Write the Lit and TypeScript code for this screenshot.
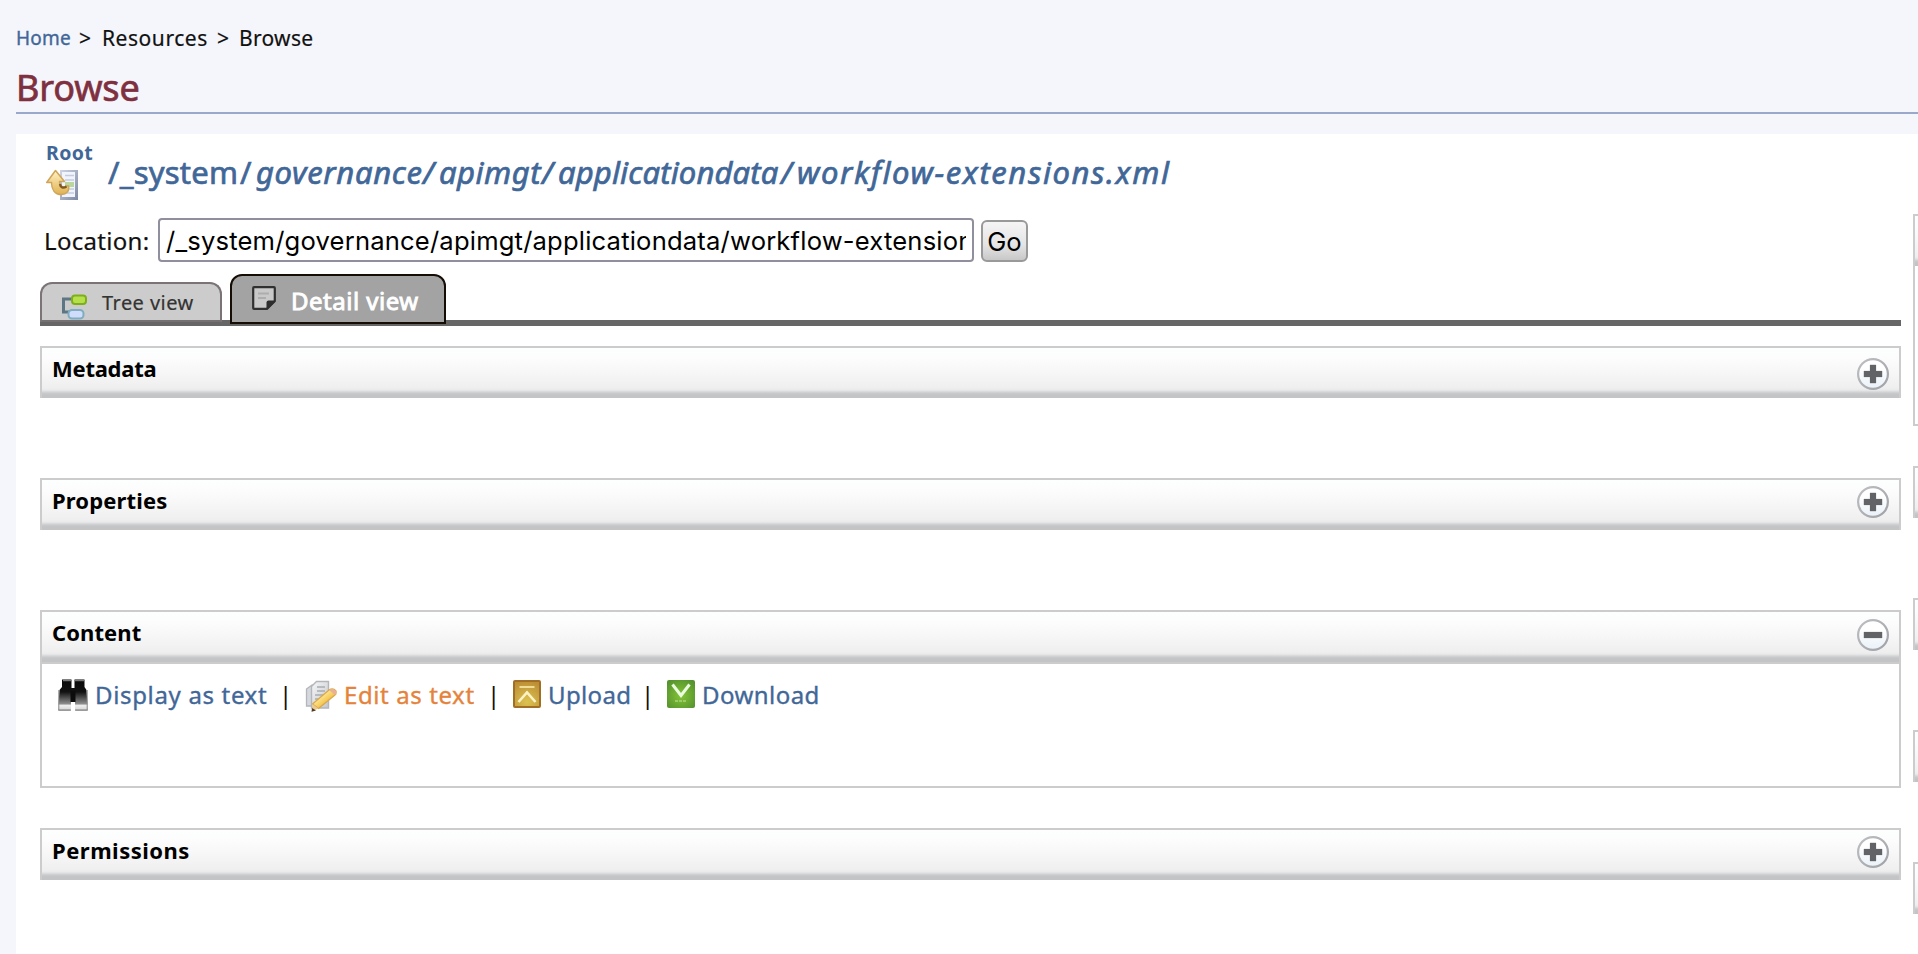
import { LitElement, html, css, svg, nothing } from "lit";
import { customElement, property } from "lit/decorators.js";
import { classMap } from "lit/directives/class-map.js";

const rootIcon = html`<svg width="32" height="32" viewBox="0 0 32 32">
  <defs>
    <linearGradient id="rp" x1="0" y1="0" x2="1" y2="1"><stop offset="0" stop-color="#cfd5e4" /><stop offset="1" stop-color="#7d88a3" /></linearGradient>
    <linearGradient id="ra" x1="0" y1="0" x2="0" y2="1"><stop offset="0" stop-color="#fff3c4" /><stop offset="1" stop-color="#e0b152" /></linearGradient>
  </defs>
  <rect x="14" y="1" width="18" height="30" fill="url(#rp)" />
  <rect x="16" y="3" width="13" height="25" fill="#f1f4fb" />
  <path d="M19 6.500h9M19 11h9M19 20h9M19 24h9" stroke="#c3cbdf" stroke-width="1.600" />
  <path d="M19 15.500h9" stroke="#b9d79c" stroke-width="5" />
  <path d="M9.500 1.500L18.500 12.500H13.500C13.500 17 15 18.500 18 18.500C20 18.500 20 16 22.500 17C23.500 22 20.500 25.500 15.500 25.500C8.500 25.500 5.500 20 5.500 13.500H.7Z" fill="url(#ra)" stroke="#cfa55a" stroke-width="1.500" stroke-linejoin="round" />
  <path d="M14 15C14.500 18.500 17 19.500 20.500 17.500" fill="none" stroke="#80591f" stroke-width="2.400" />
</svg>`;

const treeIcon = html`<svg width="26" height="26" viewBox="0 0 26 26">
  <path d="M11 5H2.500V18H8" fill="none" stroke="#5d7684" stroke-width="3" />
  <rect x="11" y="1.500" width="14" height="8.500" rx="3" fill="#b5e04c" stroke="#7fae1b" stroke-width="2" />
  <rect x="7.500" y="16" width="15" height="8.500" rx="3.500" fill="#cfdcfb" stroke="#7fadc0" stroke-width="2" />
</svg>`;

const noteIcon = html`<svg width="24" height="24" viewBox="0 0 24 24">
  <path d="M2 1.200H22Q22.800 1.200 22.800 2V15L15 22.800H2Q1.200 22.800 1.200 22V2Q1.200 1.200 2 1.200Z" fill="#c9c9c9" stroke="#303030" stroke-width="2.200" />
  <path d="M22.500 14.500H16.500Q14.500 14.500 14.500 16.500V23H16L23 16Z" fill="#2d2d2d" />
  <path d="M6 7.500H17M6 12H14" stroke="#adadad" stroke-width="2" />
</svg>`;

const binocularsIcon = html`<svg width="30" height="32" viewBox="0 0 30 32">
  <defs><linearGradient id="bn" x1="0" y1="0" x2="0" y2="1"><stop offset="0" stop-color="#080808" /><stop offset=".4" stop-color="#111" /><stop offset=".78" stop-color="#8c8c8c" /><stop offset=".84" stop-color="#eee" /><stop offset=".94" stop-color="#ddd" /><stop offset="1" stop-color="#888" /></linearGradient></defs>
  <path d="M4 .5H13.500V9H16.500V.5H26.500V8L28.500 11L30 31.500H17V23H13V31.500H0L1.500 11L4 8Z" fill="url(#bn)" />
  <path d="M5 1.500H13M17 1.500H26" stroke="#777" stroke-width="1.600" />
  <path d="M.8 11V31.200H12.600M29.200 11V31.200H17.400" fill="none" stroke="#8a8a8a" stroke-width="1" />
  <path d="M12.500 12H17.500V23H12.500Z" fill="#0c0c0c" />
</svg>`;

const editIcon = html`<svg width="32" height="32" viewBox="0 0 32 32">
  <defs>
    <linearGradient id="ep" x1="0" y1="0" x2="1" y2="1"><stop offset="0" stop-color="#f6f7f8" /><stop offset="1" stop-color="#c3c6cb" /></linearGradient>
    <linearGradient id="ey" x1="0" y1="0" x2="1" y2="1"><stop offset=".3" stop-color="#fff0a0" /><stop offset=".7" stop-color="#f0b93c" /></linearGradient>
  </defs>
  <path d="M1.500 9L7 5V26H1.500Z" fill="#d5d8dc" stroke="#b3b6bb" stroke-width="1.300" />
  <path d="M6.500 6.500L11.500 1.500H23.500V28H6.500Z" fill="url(#ep)" stroke="#b3b6bb" stroke-width="1.400" />
  <path d="M12 7H20M12 11H20M10 15H20M10 19H16" stroke="#a9adb3" stroke-width="1.500" />
  <path d="M7.500 24L24 10Q28 7.500 31 11Q31.500 14 30 15L13.500 28.500Z" fill="url(#ey)" stroke="#dba64a" stroke-width="1.200" />
  <path d="M24 10Q28 7.500 31 11Q31.500 14 30 15Z" fill="#e9b296" />
  <path d="M7.500 24L13.500 28.500L7 31.500Z" fill="#ecc98c" />
  <path d="M7 28L11 30.500L6.500 31.700Z" fill="#4e3a25" />
</svg>`;

const uploadIcon = html`<svg width="28" height="28" viewBox="0 0 28 28">
  <defs><radialGradient id="up" cx=".5" cy=".8" r=".8"><stop offset="0" stop-color="#dcc351" /><stop offset="1" stop-color="#bd8f35" /></radialGradient></defs>
  <rect x="1" y="1" width="26" height="26" rx="1" fill="url(#up)" stroke="#a06f25" stroke-width="2" />
  <path d="M6.500 7H21.500" stroke="#f0dc94" stroke-width="2" />
  <path d="M5.500 22L14 12.500L22.500 22" fill="none" stroke="#fbf3c4" stroke-width="2.600" />
</svg>`;

const downloadIcon = html`<svg width="28" height="28" viewBox="0 0 28 28">
  <defs><radialGradient id="dn" cx=".5" cy=".55" r=".65"><stop offset="0" stop-color="#84c436" /><stop offset="1" stop-color="#55922f" /></radialGradient></defs>
  <rect width="28" height="28" rx="2" fill="url(#dn)" />
  <path d="M5.500 4.500L14 15.500L22.500 4.500" fill="none" stroke="#eafbe0" stroke-width="3" />
  <path d="M8 21H20" stroke="#a5d67a" stroke-width="1.300" stroke-dasharray="3 1" />
</svg>`;

@customElement("section-bar")
class SectionBar extends LitElement {
  @property() label = "";
  @property() sign = "";
  @property({ type: Number }) drop = 7;

  static styles = css`
    :host { display: block; font-family: "Noto Sans", sans-serif; }
    .bar {
      box-sizing: border-box; height: 52px; border: 2px solid #ccc; border-bottom: 0;
      background: linear-gradient(#fdfefe 0, #fcfcfc 12px, #efeff0 40px, #e9eaeb 42px, #c9cbcd 45px, #c2c4c6 47px);
      display: flex; justify-content: space-between; padding: 0 10px;
    }
    .label { font-weight: bold; font-size: 22px; line-height: 41px; color: #000; white-space: nowrap; }
    .Metadata { letter-spacing: -0.25px; }
    .Properties { letter-spacing: 0.15px; }
    .Permissions { letter-spacing: 0.5px; }
    .Content { letter-spacing: 0.1px; }
    svg { display: block; }
    .sign { height: 32px; }
    .low { padding-top: 10px; }
    .mid { padding-top: 7px; }
    .high { padding-top: 6px; }
  `;

  render() {
    const pos = classMap({ sign: true, low: this.drop === 10, mid: this.drop === 7, high: this.drop === 6 });
    return html`<div class="bar">
      <span class="label ${this.label}">${this.label}</span>
      ${this.sign
        ? html`<span class=${pos}><svg width="32" height="32" viewBox="0 0 32 32">
            <defs>
              <linearGradient id="f" x1="0" y1="0" x2="0" y2="1"><stop offset=".3" stop-color="#fff" /><stop offset="1" stop-color="#e9f1f8" /></linearGradient>
              <linearGradient id="s" x1="0" y1="0" x2="1" y2="1"><stop offset="0" stop-color="#bdbfc3" /><stop offset="1" stop-color="#9fa1a6" /></linearGradient>
            </defs>
            <circle cx="16" cy="16" r="14.900" fill="url(#f)" stroke="url(#s)" stroke-width="2.200" />
            <path d="M6.800 16H25.200" stroke="#626366" stroke-width="6.200" />
            ${this.sign === "plus" ? svg`<path d="M16 6.800V25.200" stroke="#626366" stroke-width="6.200" />` : nothing}
          </svg></span>`
        : nothing}
    </div>`;
  }
}

@customElement("app-root")
class AppRoot extends LitElement {
  static styles = css`
    :host {
      display: block; box-sizing: border-box; width: 100%; height: 954px; overflow: hidden;
      background: #f5f6fb; padding-left: 16px; color: #111; font-family: "Noto Sans", sans-serif; white-space: nowrap;
    }
    svg { display: block; flex: none; }
    a { color: #416798; text-decoration: none; }
    .crumbs { display: flex; height: 76px; font-size: 21px; line-height: 76px; -webkit-text-stroke: 0.2px; }
    .crumbs a { font-size: 19px; width: 63px; letter-spacing: 0.2px; line-height: 76px; -webkit-text-stroke: 0.35px; }
    .crumbs span { flex: none; }
    .gt { width: 23px; }
    .gt2 { padding-left: 2px; width: 22px; }
    .res { width: 113px; letter-spacing: 0.55px; }
    .brw { letter-spacing: 0.3px; }
    h1 {
      margin: 0; height: 36px; font-size: 36px; line-height: 24px; font-weight: 400; color: #7f3040; letter-spacing: -0.15px;
      -webkit-text-stroke: 0.7px #7f3040; border-bottom: 2px solid #9aa8cb;
    }
    .page { margin-top: 20px; height: 820px; background: #fff; display: flex; justify-content: space-between; }
    .main { width: 1861px; margin-left: 24px; }
    .path { display: flex; height: 70px; }
    .root { width: 62px; padding-left: 6px; font-size: 19.5px; font-weight: bold; letter-spacing: 0.4px; }
    .root span { display: block; height: 35px; line-height: 37px; }
    .trail { display: flex; font-size: 31px; line-height: 76px; -webkit-text-stroke: 0.7px #416798; color: #416798; }
    .trail a, .trail i { flex: none; }
    .sys { width: 132px; letter-spacing: 0.2px; }
    .sl { width: 16px; }
    .gov { width: 167px; letter-spacing: 0.65px; }
    .api { width: 103px; letter-spacing: 0.5px; }
    .data { width: 223px; letter-spacing: 0.15px; }
    .file { letter-spacing: 1.6px; }
    .loc { display: flex; height: 58px; margin-top: 14px; align-items: flex-start; }
    .loc label { width: 114px; padding-left: 4px; font-size: 24px; letter-spacing: 0.3px; line-height: 45px; -webkit-text-stroke: 0.2px; }
    .field {
      box-sizing: border-box; width: 816px; height: 44px; padding: 0 6px; border: 2px solid #8f8f9d; border-radius: 4px;
      background: #fff; color: #000; font: 25.6px Inter, sans-serif; letter-spacing: 0.18px; outline: 0; margin: 0;
    }
    .go {
      box-sizing: border-box; width: 47px; height: 42px; margin: 2px 0 0 7px; padding: 0; border: 2px solid #999;
      border-radius: 6px; background: linear-gradient(#f5f5f5, #e4e4e4 60%, #c8c8c8); color: #000; font: 25.6px Inter, sans-serif;
    }
    .tabs { display: flex; align-items: flex-end; gap: 8px; height: 50px; margin-top: -2px;
      background: linear-gradient(#666, #666) 0 46px / 100% 4px no-repeat; }
    .rule { height: 2px; background: #666; }
    .tab { box-sizing: border-box; display: flex; border: 2px solid #7a7476; border-radius: 12px 12px 0 0; }
    .tree { width: 182px; height: 40px; margin-bottom: 2px; padding: 10px 0 0 19px; background: #ccc; border-bottom-color: #757072; font-size: 20px; color: #333; letter-spacing: 0.45px; -webkit-text-stroke: 0.2px; }
    .tree span { line-height: 20px; margin: -1px 0 0 15px; }
    .detail { width: 216px; height: 50px; padding: 10px 0 0 20px; background: #a3a3a3; border-color: #150c06; font-size: 24px; color: #fff; letter-spacing: 0.5px; -webkit-text-stroke: 0.9px #fff; }
    .detail span { line-height: 24px; margin: 3px 0 0 15px; }
    .metadata { margin-top: 20px; }
    .gap { margin-top: 80px; }
    .box { box-sizing: border-box; height: 126px; border: 2px solid #ccc; }
    .actions { display: flex; padding: 14px 0 0 16px; font-size: 24px; line-height: 33px; }
    .actions > * { flex: none; }
    .actions a { -webkit-text-stroke: 0.35px; }
    .t1 { margin-left: 7px; width: 184px; letter-spacing: 0.66px; }
    .t2 { margin-left: 7px; width: 143px; letter-spacing: 0.6px; }
    .t3 { margin-left: 7px; width: 93px; letter-spacing: 0.35px; }
    .t4 { margin-left: 7px; letter-spacing: 0.45px; }
    .hot { color: #e5833b; }
    .bar { width: 26px; }
    .bar1 { width: 26px; }
    .actions .pen { margin-top: 1px; }
    .tile { margin-top: 2px; }
    .perm { margin-top: 40px; }
    .side { width: 5px; overflow: hidden; padding-top: 80px; }
    .side section-bar { width: 400px; }
    .sbox { box-sizing: border-box; width: 400px; height: 160px; border: 2px solid #ccc; border-top: 0; margin-bottom: 40px; }
    .side .next { margin-bottom: 80px; }
  `;

  render() {
    return html`
      <div class="crumbs"><a>Home</a><span class="gt">&gt;</span><span class="res">Resources</span><span class="gt2">&gt;</span><span class="brw">Browse</span></div>
      <h1>Browse</h1>
      <div class="page">
        <div class="main">
          <div class="path">
            <a class="root"><span>Root</span>${rootIcon}</a>
            <div class="trail">
              <a class="sys">/_system</a><a class="sl">/</a><i class="gov">governance</i><i class="sl">/</i><i class="api">apimgt</i><i class="sl">/</i><i class="data">applicationdata</i><i class="sl">/</i><i class="file">workflow-extensions.xml</i>
            </div>
          </div>
          <div class="loc">
            <label>Location:</label>
            <input class="field" value="/_system/governance/apimgt/applicationdata/workflow-extensions.xml" />
            <button class="go">Go</button>
          </div>
          <div class="tabs">
            <div class="tab tree">${treeIcon}<span>Tree view</span></div>
            <div class="tab detail">${noteIcon}<span>Detail view</span></div>
          </div>
          <div class="rule"></div>
          <section-bar class="metadata" label="Metadata" sign="plus" drop="10"></section-bar>
          <section-bar class="gap" label="Properties" sign="plus" drop="6"></section-bar>
          <section-bar class="gap" label="Content" sign="minus" drop="7"></section-bar>
          <div class="box">
            <div class="actions">
              <span class="pen">${binocularsIcon}</span><a class="t1">Display as text</a><span class="bar1">|</span>
              <span class="tile">${editIcon}</span><a class="t2 hot">Edit as text</a><span class="bar">|</span>
              <span class="tile">${uploadIcon}</span><a class="t3">Upload</a><span class="bar">|</span>
              <span class="tile">${downloadIcon}</span><a class="t4">Download</a>
            </div>
          </div>
          <section-bar class="perm" label="Permissions" sign="plus" drop="6"></section-bar>
        </div>
        <div class="side">
          <section-bar></section-bar>
          <div class="sbox"></div>
          <section-bar class="next"></section-bar>
          <section-bar class="next"></section-bar>
          <section-bar class="next"></section-bar>
          <section-bar class="next"></section-bar>
        </div>
      </div>`;
  }
}
